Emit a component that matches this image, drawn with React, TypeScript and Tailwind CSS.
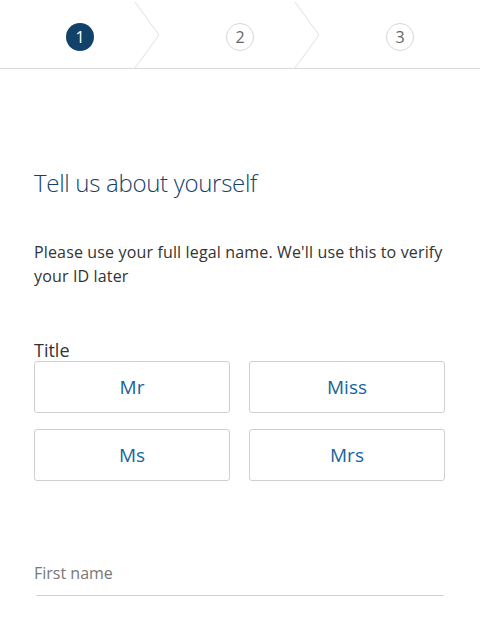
const Step = ({ n, active, chevron }: { n: number; active?: boolean; chevron?: boolean }) => (
  <div className="relative flex-1 h-full flex items-center justify-center pt-[5px]">
    {active ? (
      <div className="w-[28px] h-[28px] rounded-full bg-[#12426a] text-white flex items-center justify-center text-[16px]">
        {n}
      </div>
    ) : (
      <div className="w-[28px] h-[28px] rounded-full border border-[#d8d8d8] text-[#666] flex items-center justify-center text-[16px]">
        {n}
      </div>
    )}
    {chevron && (
      <svg className="absolute right-0 top-0" width="26" height="68" viewBox="0 0 26 68">
        <path d="M1 2 L25 35 L1 68" fill="none" stroke="#e0e0e0" strokeWidth="1" />
      </svg>
    )}
  </div>
)

const TitleButton = ({ label }: { label: string }) => (
  <button className="h-[52px] rounded-[3px] border border-[#cfcfcf] bg-white text-[#16659c] text-[19px]">
    {label}
  </button>
)

const App = () => {
  return (
    <div className="w-[480px] h-[640px] bg-white overflow-hidden font-['Open_Sans',sans-serif]">
      <div className="h-[69px] flex border-b border-[#dcdcdc]">
        <Step n={1} active chevron />
        <Step n={2} chevron />
        <Step n={3} />
      </div>

      <div className="px-[34px]">
        <h1 className="mt-[98px] text-[24px] font-light text-[#12426a] tracking-[-0.3px] leading-[32px]">
          Tell us about yourself
        </h1>
        <p className="mt-[41px] text-[16px] tracking-[0.15px] leading-[24px] text-[#333]">
          Please use your full legal name. We'll use this to verify your ID later
        </p>

        <div className="mt-[52px] text-[18px] leading-[21px] text-[#333]">Title</div>
        <div className="grid grid-cols-2 gap-x-[19px] gap-y-[16px] mt-0 pr-[1px]">
          <TitleButton label="Mr" />
          <TitleButton label="Miss" />
          <TitleButton label="Ms" />
          <TitleButton label="Mrs" />
        </div>

        <div className="mt-[80px] text-[16px] text-[#777]">First name</div>
        <div className="mt-[10px] mx-[2px] border-b border-[#d0d0d0] rounded-b-[2px]"></div>
      </div>
    </div>
  )
}

export default App
